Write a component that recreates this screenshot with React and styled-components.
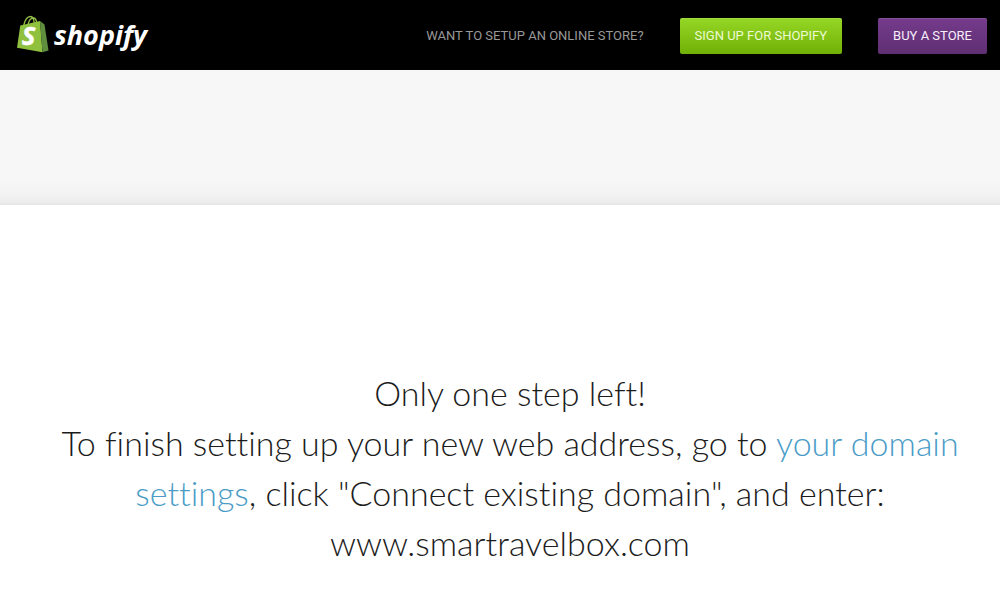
import React from 'react';
import styled, { createGlobalStyle } from 'styled-components';

const GlobalStyle = createGlobalStyle`
    * {
        box-sizing: border-box;
    }

    body {
        margin: 0;
        background: #fff;
        color: #1c1c1c;
        font-family: Lato, "Open Sans", sans-serif;
    }
`

const StyledHeader = styled.header`
    display: flex;
    align-items: center;
    justify-content: space-between;
    min-height: 70px;
    padding: 2px 13px 0 16px;
    background: #000;
`

const StyledLogo = styled.a`
    display: flex;
    align-items: center;
    gap: 4px;
    padding-bottom: 4px;
    color: #fff;
    text-decoration: none;

    svg {
        display: block;
        width: 34px;
        height: 38px;
    }

    span {
        padding-top: 2px;
        font-family: "Open Sans", sans-serif;
        font-size: 27px;
        font-style: italic;
        font-weight: 700;
        line-height: 38px;
    }
`

const StyledNav = styled.nav`
    display: flex;
    align-items: center;
    gap: 36px;
    font-family: Roboto, sans-serif;
    font-size: 13px;
    text-transform: uppercase;

    p {
        margin: 0;
        padding-bottom: 2px;
        color: #999;
    }
`

const NavButton = styled.button`
    height: 36px;
    padding: 0 15px 1px;
    border: 0;
    border-radius: 2px;
    background: ${({ $purple }) => $purple
        ? 'linear-gradient(#753b8c, #5f2f73)'
        : 'linear-gradient(#95d726, #71b006)'};
    box-shadow: inset 0 1px 0 rgba(255, 255, 255, 0.12);
    color: ${({ $purple }) => $purple ? '#f6effa' : '#edfad2'};
    font: inherit;
    text-transform: inherit;
    white-space: nowrap;
    cursor: pointer;
`

const StyledBanner = styled.div`
    height: 135px;
    background: linear-gradient(to top, #e4e4e4, #ededed 3px, #f3f3f3 12px, #f7f7f7 26px);
`

const StyledMessage = styled.main`
    padding: 163px 20px 30px 40px;
    text-align: center;

    h1 {
        margin: 0;
        font-size: 34px;
        font-variant-ligatures: none;
        font-weight: 300;
        line-height: 50px;
    }

    a {
        color: #4a9cc7;
        text-decoration: none;
    }
`

const BagIcon = () => (
    <svg viewBox="0 0 34 38" aria-hidden="true">
        <path d="M7.5 11C9 4.5 12 1.5 14.5 1.5c2.6 0 3.6 3.4 3.8 7.5M12 9.5C13 5 15.5 3 17.5 3c2 0 2.8 2 3.2 4.8" fill="none" stroke="#95bf47" strokeWidth="1.3" />
        <path d="M4.3 10.5 24 6 26.5 37.3 1 32.8z" fill="#8fc13e" />
        <path d="M24 6 28.5 9.5 32.5 35.5 26.5 37.3z" fill="#5e8e3e" />
        <text x="6" y="30" fill="#fff" stroke="#fff" strokeWidth="0.6" fontFamily="Liberation Sans Narrow, Open Sans, sans-serif" fontSize="25" fontStyle="italic" fontWeight="700">S</text>
    </svg>
)

const Header = () => (
    <StyledHeader>
        <StyledLogo href="#">
            <BagIcon />
            <span>shopify</span>
        </StyledLogo>
        <StyledNav>
            <p>Want to setup an online store?</p>
            <NavButton type="button">Sign up for Shopify</NavButton>
            <NavButton type="button" $purple>Buy a store</NavButton>
        </StyledNav>
    </StyledHeader>
)

const Message = () => (
    <StyledMessage>
        <h1>
            Only one step left!<br />
            To finish setting up your new web address, go to <a href="#">your domain settings</a>, click "Connect existing domain", and enter:<br />
            www.smartravelbox.com
        </h1>
    </StyledMessage>
)

const App = () => (
    <React.Fragment>
        <GlobalStyle />
        <Header />
        <StyledBanner />
        <Message />
    </React.Fragment>
)

export default App;
